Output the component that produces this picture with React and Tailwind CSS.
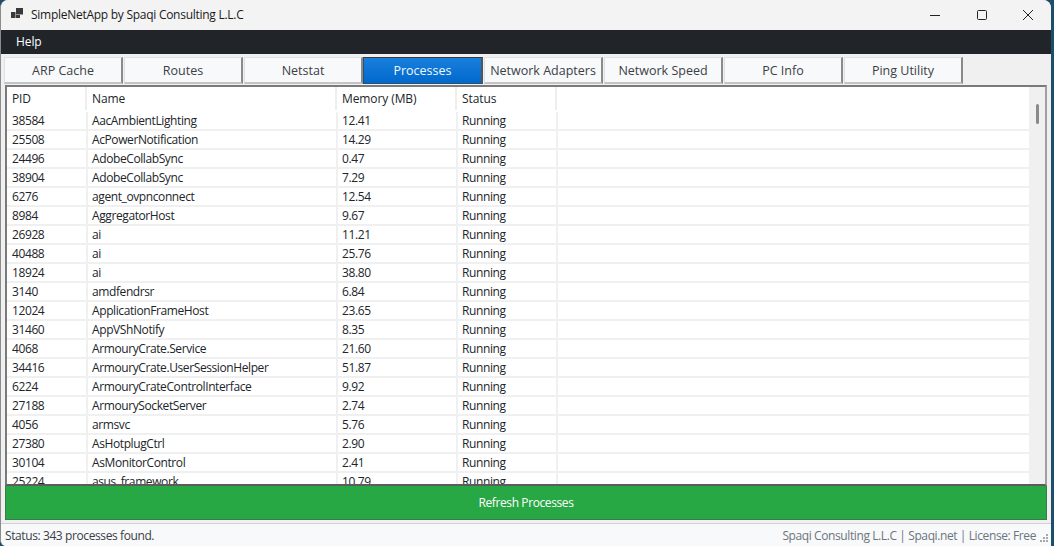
const rows = [
  ["38584","AacAmbientLighting","12.41"],["25508","AcPowerNotification","14.29"],["24496","AdobeCollabSync","0.47"],["38904","AdobeCollabSync","7.29"],["6276","agent_ovpnconnect","12.54"],["8984","AggregatorHost","9.67"],["26928","ai","11.21"],["40488","ai","25.76"],["18924","ai","38.80"],["3140","amdfendrsr","6.84"],["12024","ApplicationFrameHost","23.65"],["31460","AppVShNotify","8.35"],["4068","ArmouryCrate.Service","21.60"],["34416","ArmouryCrate.UserSessionHelper","51.87"],["6224","ArmouryCrateControlInterface","9.92"],["27188","ArmourySocketServer","2.74"],["4056","armsvc","5.76"],["27380","AsHotplugCtrl","2.90"],["30104","AsMonitorControl","2.41"],["25224","asus_framework","10.79"],
];
const tabs = ["ARP Cache","Routes","Netstat","Processes","Network Adapters","Network Speed","PC Info","Ping Utility"];

export default function App() {
  return (
    <div className="w-[1054px] h-[546px] overflow-hidden bg-[#1d4f6b] font-['Open_Sans',sans-serif] text-[12px] tracking-[-0.4px] text-[#212529]">
      <div className="w-[1051px] h-[546px] flex flex-col bg-[#f0f0f0] rounded-t-[8px] rounded-bl-[6px] border-l border-[#8c8c8c] overflow-hidden">
        <div className="h-[30px] shrink-0 flex items-center bg-[#f3f3f3]">
          <svg className="ml-[10px] w-[14px] h-[14px]" viewBox="0 0 14 14" fill="#3a3a3a"><rect x="0" y="4" width="4.5" height="6"/><rect x="5" y="0" width="7" height="6.5"/><rect x="5" y="7" width="4" height="3"/></svg>
          <span className="ml-[6px] text-[12px] tracking-[-0.27px] text-[#1a1a1a]">SimpleNetApp by Spaqi Consulting L.L.C</span>
          <div className="ml-auto flex items-center">
            <svg className="w-[12px] h-[12px] mr-[35px]" viewBox="0 0 12 12"><path d="M1 6.5H11" stroke="#222" strokeWidth="1"/></svg>
            <svg className="w-[12px] h-[12px] mr-[34px]" viewBox="0 0 12 12"><rect x="1.5" y="1.5" width="9" height="9" rx="1" fill="none" stroke="#222"/></svg>
            <svg className="w-[12px] h-[12px] mr-[17px]" viewBox="0 0 12 12"><path d="M1 1L11 11M11 1L1 11" stroke="#222" strokeWidth="1"/></svg>
          </div>
        </div>
        <div className="h-[24px] shrink-0 flex items-center bg-[#212529] pl-[15px] text-white text-[12px] tracking-[-0.1px]">Help</div>
        <div className="h-[30px] shrink-0 flex gap-[1px] pl-[3px] pt-[3px] bg-[#f0f0f0]">
          {tabs.map((t,i)=>(
            <div key={t} className={i===3
              ? "w-[120px] -ml-[1px] h-[27px] pt-[2px] flex items-center justify-center bg-linear-to-b from-[#187fdc] to-[#0069cc] text-[#f2f8fd] border border-[#2a4f73] border-r-2 border-r-[#555] border-t-[#3a3a3a] text-[12.5px] tracking-normal"
              : "w-[119px] h-[27px] pt-[2px] flex items-center justify-center bg-[#f8f9fa] text-[#3b4046] border-t border-l border-[#dee2e6] border-r-2 border-r-[#8a8a8a] border-b-2 border-b-[#c4c4c4] text-[12.5px] tracking-normal"}>{t}</div>
          ))}
        </div>
        <div className="ml-[4px] mr-[4px] mt-[1px] h-[401px] shrink-0 flex border-2 border-[#a0a0a0] border-t-[#7a7a7a] border-l-[#7a7a7a] border-b-[#5c5c5c] bg-white overflow-hidden">
          <div className="flex-1 min-w-0 flex flex-col">
            <div className="h-[23px] shrink-0 flex items-center font-medium text-[12px] tracking-[-0.1px] text-[#212529]">
              <div className="w-[80px] h-full pl-[5px] flex items-center border-r-2 border-[#eeeeee]">PID</div>
              <div className="w-[250px] h-full pl-[5px] flex items-center border-r-2 border-[#eeeeee]">Name</div>
              <div className="w-[120px] h-full pl-[5px] flex items-center border-r-2 border-[#eeeeee]">Memory (MB)</div>
              <div className="w-[100px] h-full pl-[5px] flex items-center border-r-2 border-[#eeeeee]">Status</div>
            </div>
            {rows.map((r,i)=>(
              <div key={r[0]} className={i===0
                ? "h-[19px] shrink-0 flex items-center border-t-2 border-transparent box-border"
                : "h-[19px] shrink-0 flex items-center border-t-2 border-[#f0f0f0] box-border"}>
                <div className="w-[81px] h-full pl-[5px] flex items-center border-r-2 border-[#f0f0f0]">{r[0]}</div>
                <div className="w-[250px] h-full pl-[4px] flex items-center border-r-2 border-[#f0f0f0]">{r[1]}</div>
                <div className="w-[120px] h-full pl-[4px] flex items-center border-r-2 border-[#f0f0f0]">{r[2]}</div>
                <div className="w-[100px] h-full pl-[4px] flex items-center border-r-2 border-[#f0f0f0]">Running</div>
              </div>
            ))}
          </div>
          <div className="w-[16px] shrink-0 bg-[#f0f0f0] flex justify-center pt-[17px]">
            <div className="w-[3px] h-[20px] bg-[#8a8a8a] rounded-full"></div>
          </div>
        </div>
        <div className="ml-[4px] mr-[4px] h-[34px] shrink-0 flex items-center justify-center bg-[#28a745] text-white border border-t-0 border-[#3b7a4b]">Refresh Processes</div>
        <div className="mt-[3px] flex-1 relative flex items-center justify-between bg-[#f8f9fa] border-t border-[#d0d0d0] pt-[2px] pl-[4px] pr-[15px]">
          <span className="text-[#3b4046]">Status: 343 processes found.</span>
          <span className="text-[#6c757d]">Spaqi Consulting L.L.C | Spaqi.net | License: Free</span>
          <svg className="absolute right-[2px] bottom-[3px] w-[10px] h-[10px]" viewBox="0 0 10 10" fill="#a8a8a8"><rect x="7" y="1" width="2" height="2"/><rect x="4" y="4" width="2" height="2"/><rect x="7" y="4" width="2" height="2"/><rect x="1" y="7" width="2" height="2"/><rect x="4" y="7" width="2" height="2"/><rect x="7" y="7" width="2" height="2"/></svg>
        </div>
      </div>
    </div>
  );
}
